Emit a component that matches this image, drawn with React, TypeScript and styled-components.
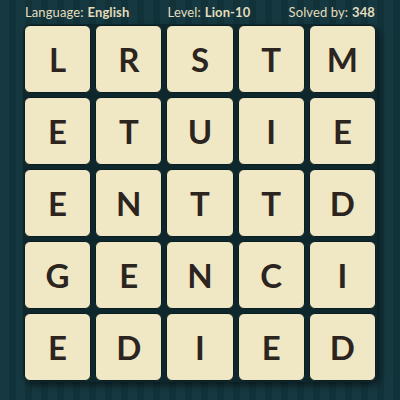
import React from 'react';
import styled, { createGlobalStyle } from 'styled-components';

const Global = createGlobalStyle`
  html, body {
    margin: 0;
    padding: 0;
  }
  body {
    width: 400px;
    height: 400px;
    overflow: hidden;
    font-family: Lato, "Open Sans", sans-serif;
  }
`;

const Screen = styled.main`
  width: 400px;
  height: 400px;
  display: flex;
  flex-direction: column;
  align-items: center;
  background: repeating-linear-gradient(
    90deg,
    #163840 0px,
    #163840 9px,
    #12323a 9px,
    #12323a 16px
  );
`;

const Header = styled.header`
  width: 350px;
  height: 22px;
  display: flex;
  justify-content: space-between;
  align-items: center;
  padding-top: 1px;
  color: #e4dcbc;
  font-size: 13px;
  letter-spacing: 0.1px;
`;

const Stat = styled.span`
  b {
    font-weight: 700;
    margin-left: 4px;
  }
`;

const Board = styled.section`
  margin-top: 1px;
  width: 352px;
  height: 356px;
  padding: 1px;
  display: grid;
  grid-template-columns: repeat(5, 1fr);
  grid-template-rows: repeat(5, 1fr);
  gap: 4px;
  background: #0d272d;
  border-radius: 8px;
  box-shadow: 3px 4px 6px rgba(0, 0, 0, 0.45);
`;

const Tile = styled.div`
  display: flex;
  align-items: center;
  justify-content: center;
  background: #f0e8c4;
  border: 1px solid #0a1e22;
  border-radius: 6px;
  color: #2b241f;
  font-size: 33px;
  font-weight: 700;
`;

const rows = ['LRSTM', 'ETUIE', 'ENTTD', 'GENCI', 'EDIED'];

const App = () => {
  return (
    <>
      <Global />
      <Screen>
        <Header>
          <Stat>
            Language:<b>English</b>
          </Stat>
          <Stat>
            Level:<b>Lion-10</b>
          </Stat>
          <Stat>
            Solved by:<b>348</b>
          </Stat>
        </Header>
        <Board>
          {rows.map((row, r) =>
            row.split('').map((ch, c) => <Tile key={`${r}-${c}`}>{ch}</Tile>)
          )}
        </Board>
      </Screen>
    </>
  );
};

App.displayName = 'App';
export default App;
